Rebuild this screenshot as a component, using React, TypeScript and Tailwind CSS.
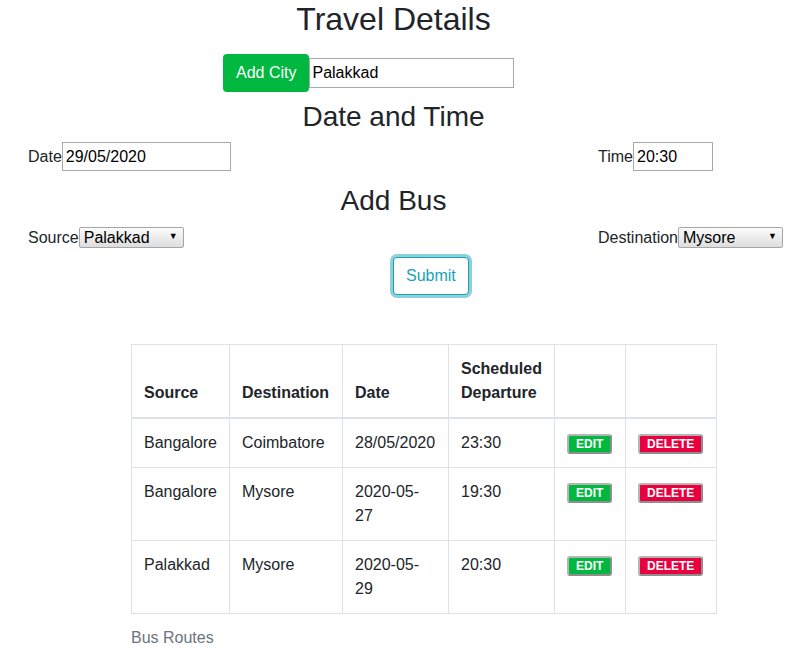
import React from "react";

type Route = { source: string; destination: string; date: React.ReactNode; time: string };

const ROUTES: Route[] = [
  { source: "Bangalore", destination: "Coimbatore", date: "28/05/2020", time: "23:30" },
  { source: "Bangalore", destination: "Mysore", date: <>2020-05-<br />27</>, time: "19:30" },
  { source: "Palakkad", destination: "Mysore", date: <>2020-05-<br />29</>, time: "20:30" },
];

function FakeSelect({ value }: { value: string }) {
  return (
    <span className="relative inline-block">
      <select
        defaultValue={value}
        className="appearance-none w-[105px] h-[21px] pl-[4px] pr-[18px] text-[16px] leading-[19px] text-black border border-[#a6a6a6] rounded-[2px] bg-gradient-to-b from-[#fbfbfb] to-[#dedede] outline-none"
      >
        <option>{value}</option>
      </select>
      <span className="pointer-events-none absolute right-[6px] top-[4px] text-[9px] leading-[12px] text-black">▼</span>
    </span>
  );
}

function SmallButton({ label, color }: { label: string; color: string }) {
  return (
    <button
      className={`inline-block align-top mt-[3px] h-[20px] px-[7px] border-2 border-t-[#b5b5b5] border-l-[#b5b5b5] border-r-[#8e8e8e] border-b-[#8e8e8e] rounded-[3px] text-white text-[12px] leading-[16px] font-bold ${color}`}
    >
      {label}
    </button>
  );
}

export default function App() {
  const cell = "p-3 border border-[#dee2e6] align-top text-left";
  const head = "p-3 border border-[#dee2e6] border-b-2 align-bottom text-left font-bold";

  return (
    <div className="w-[787px] font-['Liberation_Sans',Arial,sans-serif] text-[16px] text-[#212529] pb-4">
      <h2 className="text-center text-[32px] leading-[38px] font-normal mb-[16px]">Travel Details</h2>

      <div className="flex items-center pl-[223px]">
        <button className="h-[38px] px-[13px] bg-[#00b83f] text-white rounded-[4px] leading-6">Add City</button>
        <input
          defaultValue="Palakkad"
          className="w-[205px] h-[30px] px-[2px] border border-[#a9a9a9] text-black text-[16px]"
        />
      </div>

      <h3 className="text-center text-[28px] leading-[34px] font-normal mt-[8px] mb-[8px]">Date and Time</h3>

      <div className="flex items-center justify-between pl-[28px] pr-[74px]">
        <label className="flex items-center">
          Date
          <input defaultValue="29/05/2020" className="w-[169px] h-[29px] px-[3px] border border-[#a9a9a9] text-black text-[16px]" />
        </label>
        <label className="flex items-center">
          Time
          <input defaultValue="20:30" className="w-[80px] h-[29px] px-[3px] border border-[#a9a9a9] text-black text-[16px]" />
        </label>
      </div>

      <h3 className="text-center text-[28px] leading-[34px] font-normal mt-[13px] mb-[8px]">Add Bus</h3>

      <div className="flex items-center justify-between h-[23px] pl-[28px] pr-[4px]">
        <label className="flex items-center">
          Source
          <FakeSelect value="Palakkad" />
        </label>
        <label className="flex items-center">
          Destination
          <FakeSelect value="Mysore" />
        </label>
      </div>

      <div className="pl-[393px] mt-[8px]">
        <button className="h-[38px] px-3 border border-[#17a2b8] text-[#17a2b8] rounded-[4px] leading-6 bg-white shadow-[0_0_0_3px_rgba(23,162,184,0.5)]">
          Submit
        </button>
      </div>

      <table className="ml-[131px] mt-[49px] w-[585px] table-fixed border-collapse caption-bottom leading-6">
        <caption className="text-left pt-3 text-[#6c757d]">Bus Routes</caption>
        <colgroup>
          <col className="w-[98px]" />
          <col className="w-[113px]" />
          <col className="w-[106px]" />
          <col className="w-[106px]" />
          <col className="w-[71px]" />
          <col className="w-[91px]" />
        </colgroup>
        <thead>
          <tr>
            <th className={head}>Source</th>
            <th className={head}>Destination</th>
            <th className={head}>Date</th>
            <th className={head}>Scheduled Departure</th>
            <th className={head}></th>
            <th className={head}></th>
          </tr>
        </thead>
        <tbody>
          {ROUTES.map((r, i) => (
            <tr key={i}>
              <td className={cell}>{r.source}</td>
              <td className={cell}>{r.destination}</td>
              <td className={`${cell} whitespace-nowrap`}>{r.date}</td>
              <td className={cell}>{r.time}</td>
              <td className={cell}>
                <SmallButton label="EDIT" color="bg-[#00b83f]" />
              </td>
              <td className={cell}>
                <SmallButton label="DELETE" color="bg-[#e8003f]" />
              </td>
            </tr>
          ))}
        </tbody>
      </table>
    </div>
  );
}
